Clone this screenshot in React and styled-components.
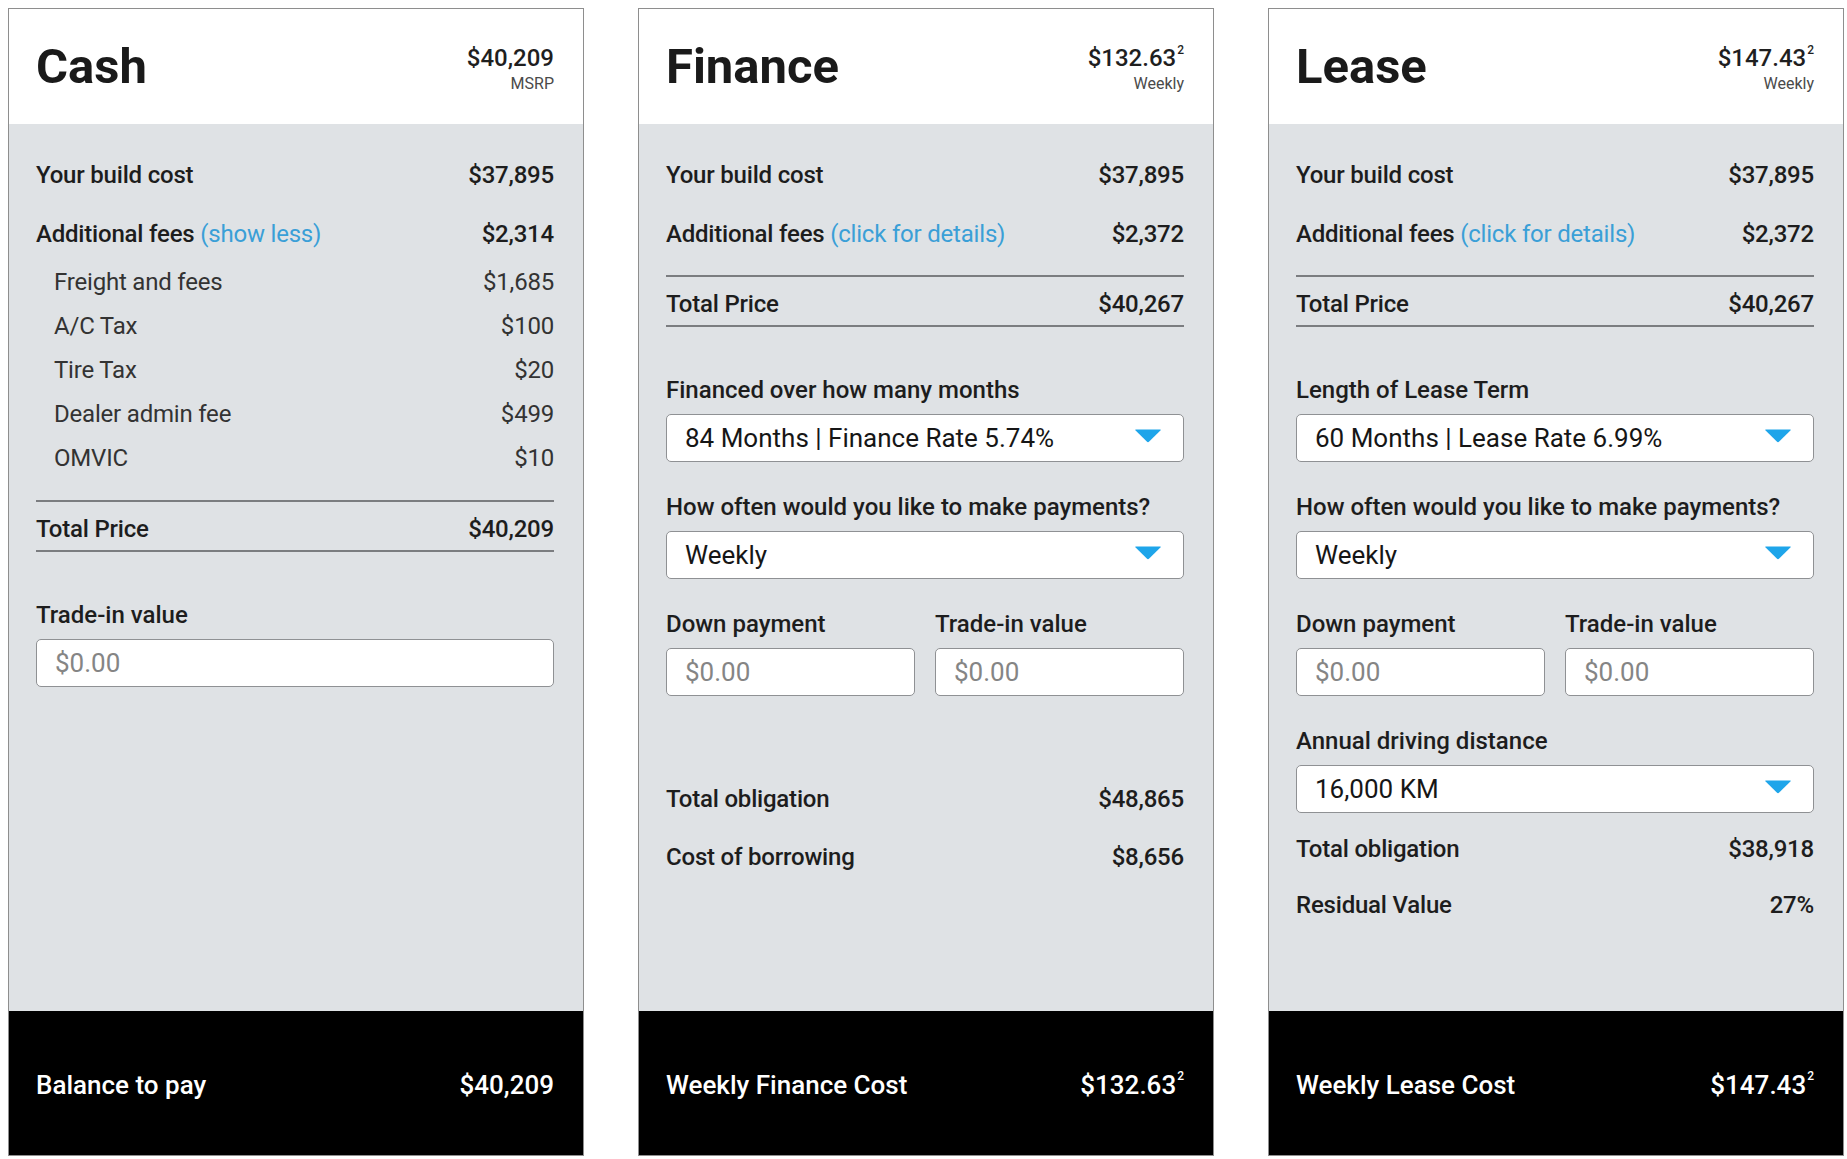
import React from "react";
import styled, { createGlobalStyle } from "styled-components";

const GlobalStyle = createGlobalStyle`
  body {
    margin: 0;
    background: #fff;
    font-family: Roboto, "Liberation Sans", sans-serif;
    color: #1b1b1b;
  }
`;

const Arrow = () => (
  <svg width="28" height="15" viewBox="0 0 28 15">
    <path d="M2 1.5 H26 Q27.5 1.5 26.4 2.6 L15.2 13.6 Q14 14.7 12.8 13.6 L1.6 2.6 Q0.5 1.5 2 1.5 Z" fill="#1ea5ea" />
  </svg>
);

const App = () => {
  return (
    <>
      <GlobalStyle />
      <Page>
        <Card>
          <Header>
            <Title>Cash</Title>
            <PriceBlock>
              <Price>$40,209</Price>
              <PriceNote>MSRP</PriceNote>
            </PriceBlock>
          </Header>
          <Body>
            <Row $mt={36}>
              <span>Your build cost</span>
              <span>$37,895</span>
            </Row>
            <Row $mt={29}>
              <span>
                Additional fees <Link>(show less)</Link>
              </span>
              <span>$2,314</span>
            </Row>
            <SubRow $mt={18}>
              <span>Freight and fees</span>
              <span>$1,685</span>
            </SubRow>
            <SubRow $mt={14}>
              <span>A/C Tax</span>
              <span>$100</span>
            </SubRow>
            <SubRow $mt={14}>
              <span>Tire Tax</span>
              <span>$20</span>
            </SubRow>
            <SubRow $mt={14}>
              <span>Dealer admin fee</span>
              <span>$499</span>
            </SubRow>
            <SubRow $mt={14}>
              <span>OMVIC</span>
              <span>$10</span>
            </SubRow>
            <TotalBlock $mt={27}>
              <Row>
                <span>Total Price</span>
                <span>$40,209</span>
              </Row>
            </TotalBlock>
            <FieldLabel $mt={48}>Trade-in value</FieldLabel>
            <Input placeholder="$0.00" readOnly />
          </Body>
          <Footer>
            <span>Balance to pay</span>
            <span>$40,209</span>
          </Footer>
        </Card>

        <Card>
          <Header>
            <Title>Finance</Title>
            <PriceBlock>
              <Price>
                $132.63<Sup>2</Sup>
              </Price>
              <PriceNote>Weekly</PriceNote>
            </PriceBlock>
          </Header>
          <Body>
            <Row $mt={36}>
              <span>Your build cost</span>
              <span>$37,895</span>
            </Row>
            <Row $mt={29}>
              <span>
                Additional fees <Link>(click for details)</Link>
              </span>
              <span>$2,372</span>
            </Row>
            <TotalBlock $mt={26}>
              <Row>
                <span>Total Price</span>
                <span>$40,267</span>
              </Row>
            </TotalBlock>
            <FieldLabel $mt={48}>Financed over how many months</FieldLabel>
            <Select>
              <span>84 Months | Finance Rate 5.74%</span>
              <Arrow />
            </Select>
            <FieldLabel $mt={30}>How often would you like to make payments?</FieldLabel>
            <Select>
              <span>Weekly</span>
              <Arrow />
            </Select>
            <Split>
              <div>
                <FieldLabel>Down payment</FieldLabel>
                <Input placeholder="$0.00" readOnly />
              </div>
              <div>
                <FieldLabel>Trade-in value</FieldLabel>
                <Input placeholder="$0.00" readOnly />
              </div>
            </Split>
            <Row $mt={88}>
              <span>Total obligation</span>
              <span>$48,865</span>
            </Row>
            <Row $mt={28}>
              <span>Cost of borrowing</span>
              <span>$8,656</span>
            </Row>
          </Body>
          <Footer>
            <span>Weekly Finance Cost</span>
            <span>
              $132.63<Sup>2</Sup>
            </span>
          </Footer>
        </Card>

        <Card>
          <Header>
            <Title>Lease</Title>
            <PriceBlock>
              <Price>
                $147.43<Sup>2</Sup>
              </Price>
              <PriceNote>Weekly</PriceNote>
            </PriceBlock>
          </Header>
          <Body>
            <Row $mt={36}>
              <span>Your build cost</span>
              <span>$37,895</span>
            </Row>
            <Row $mt={29}>
              <span>
                Additional fees <Link>(click for details)</Link>
              </span>
              <span>$2,372</span>
            </Row>
            <TotalBlock $mt={26}>
              <Row>
                <span>Total Price</span>
                <span>$40,267</span>
              </Row>
            </TotalBlock>
            <FieldLabel $mt={48}>Length of Lease Term</FieldLabel>
            <Select>
              <span>60 Months | Lease Rate 6.99%</span>
              <Arrow />
            </Select>
            <FieldLabel $mt={30}>How often would you like to make payments?</FieldLabel>
            <Select>
              <span>Weekly</span>
              <Arrow />
            </Select>
            <Split>
              <div>
                <FieldLabel>Down payment</FieldLabel>
                <Input placeholder="$0.00" readOnly />
              </div>
              <div>
                <FieldLabel>Trade-in value</FieldLabel>
                <Input placeholder="$0.00" readOnly />
              </div>
            </Split>
            <FieldLabel $mt={30}>Annual driving distance</FieldLabel>
            <Select>
              <span>16,000 KM</span>
              <Arrow />
            </Select>
            <Row $mt={21}>
              <span>Total obligation</span>
              <span>$38,918</span>
            </Row>
            <Row $mt={26}>
              <span>Residual Value</span>
              <span>27%</span>
            </Row>
          </Body>
          <Footer>
            <span>Weekly Lease Cost</span>
            <span>
              $147.43<Sup>2</Sup>
            </span>
          </Footer>
        </Card>
      </Page>
    </>
  );
};

export default App;

const Page = styled.div`
  display: flex;
  gap: 54px;
  padding: 8px 0 0 8px;
`;

const Card = styled.div`
  width: 576px;
  height: 1148px;
  box-sizing: border-box;
  border: 1px solid #8e8e8e;
  display: flex;
  flex-direction: column;
  background: #dfe2e5;
`;

const Header = styled.div`
  height: 115px;
  flex-shrink: 0;
  background: #fff;
  display: flex;
  justify-content: space-between;
  align-items: flex-start;
  padding: 0 29px 0 27px;
`;

const Title = styled.h1`
  margin: 30px 0 0;
  font-size: 49px;
  line-height: 56px;
  font-weight: 700;
  color: #1a1a1a;
`;

const PriceBlock = styled.div`
  margin-top: 35px;
  text-align: right;
`;

const Price = styled.div`
  font-size: 24px;
  line-height: 28px;
  font-weight: 500;
  color: #1f1f1f;
`;

const PriceNote = styled.div`
  margin-top: 2px;
  font-size: 16px;
  line-height: 20px;
  color: #4a4a4a;
`;

const Sup = styled.sup`
  font-size: 12px;
  line-height: 0;
  vertical-align: top;
  position: relative;
  top: 6px;
  margin-left: 1px;
`;

const Body = styled.div`
  flex: 1;
  display: flex;
  flex-direction: column;
  padding: 0 29px 0 27px;
`;

const Row = styled.div`
  display: flex;
  justify-content: space-between;
  margin-top: ${(p) => p.$mt || 0}px;
  font-size: 24px;
  line-height: 30px;
  font-weight: 500;
  letter-spacing: -0.2px;
  color: #1d1d1d;
`;

const SubRow = styled(Row)`
  padding-left: 18px;
  font-weight: 400;
  color: #333;
`;

const Link = styled.span`
  font-weight: 400;
  color: #3a9fd7;
`;

const TotalBlock = styled.div`
  margin-top: ${(p) => p.$mt}px;
  border-top: 2px solid #7b7d80;
  border-bottom: 2px solid #7b7d80;
  padding: 12px 0 6px;
`;

const FieldLabel = styled.div`
  margin-top: ${(p) => p.$mt || 0}px;
  font-size: 24px;
  line-height: 30px;
  font-weight: 500;
  color: #1d1d1d;
`;

const Input = styled.input`
  display: block;
  box-sizing: border-box;
  width: 100%;
  height: 48px;
  margin-top: 9px;
  padding: 0 18px;
  border: 1.5px solid #8f9194;
  border-radius: 5px;
  background: #fff;
  font-family: inherit;
  font-size: 26px;
  outline: none;
  &::placeholder {
    color: #858585;
  }
`;

const Select = styled.div`
  display: flex;
  align-items: center;
  justify-content: space-between;
  box-sizing: border-box;
  height: 48px;
  margin-top: 9px;
  padding: 0 21px 0 18px;
  border: 1.5px solid #8f9194;
  border-radius: 5px;
  background: #fff;
  font-size: 26px;
  color: #161616;
  svg {
    margin-top: -6px;
  }
`;

const Split = styled.div`
  display: grid;
  grid-template-columns: 1fr 1fr;
  gap: 20px;
  margin-top: 30px;
`;

const Footer = styled.div`
  height: 144px;
  flex-shrink: 0;
  box-sizing: border-box;
  background: #000;
  color: #fff;
  display: flex;
  align-items: center;
  justify-content: space-between;
  padding: 4px 29px 0 27px;
  font-size: 26px;
  line-height: 30px;
  font-weight: 500;
`;
